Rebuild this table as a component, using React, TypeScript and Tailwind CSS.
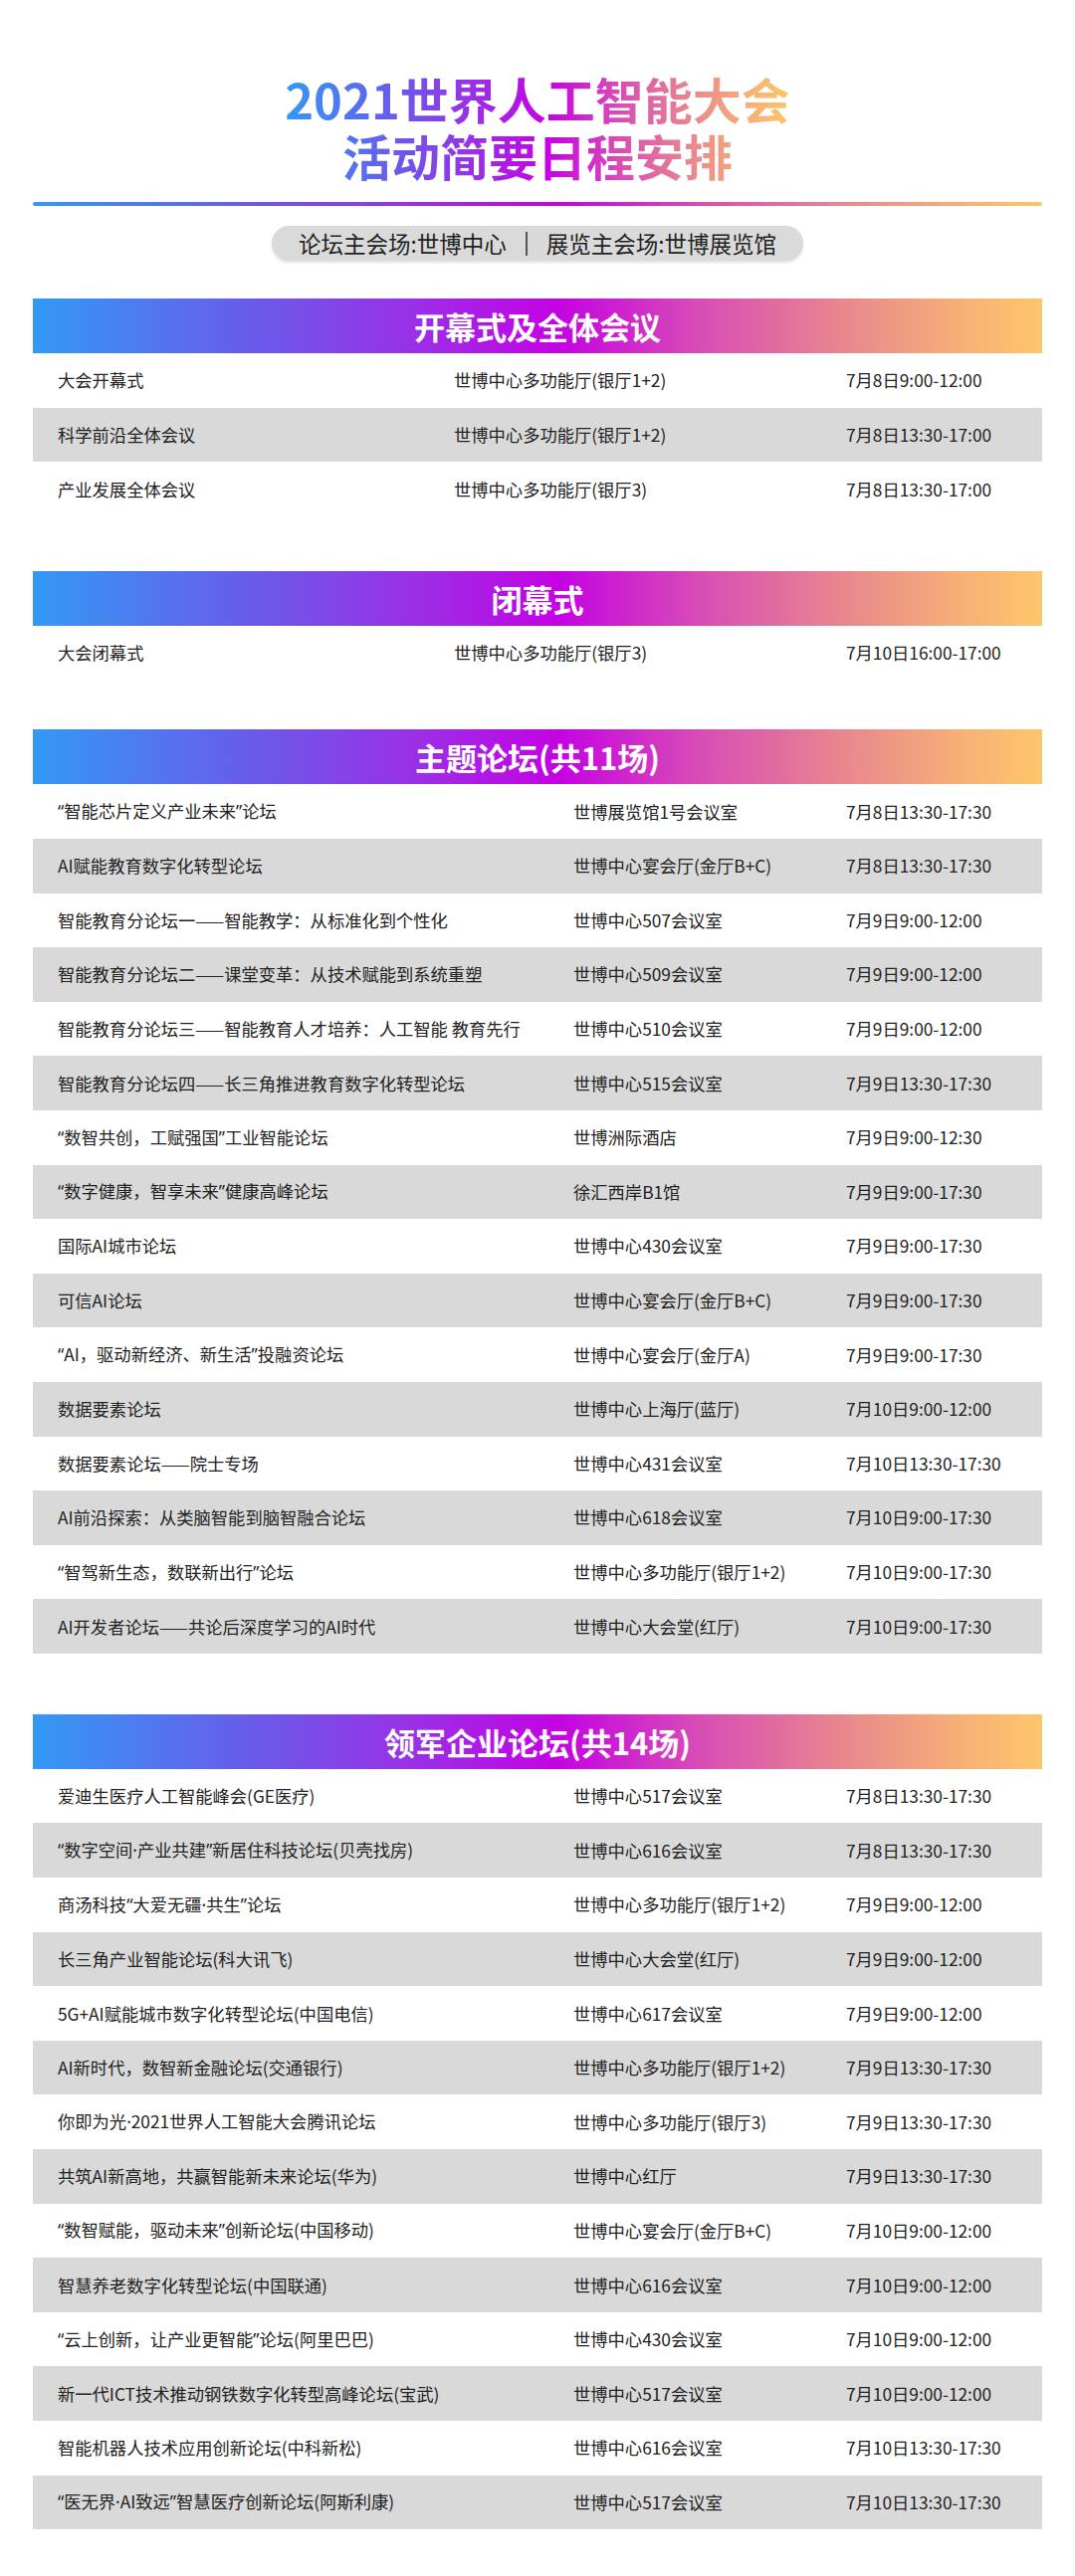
import React from "react";

type Row = [string, string, string];

const sec1: Row[] = [
  ["大会开幕式", "世博中心多功能厅(银厅1+2)", "7月8日9:00-12:00"],
  ["科学前沿全体会议", "世博中心多功能厅(银厅1+2)", "7月8日13:30-17:00"],
  ["产业发展全体会议", "世博中心多功能厅(银厅3)", "7月8日13:30-17:00"],
];

const sec2: Row[] = [["大会闭幕式", "世博中心多功能厅(银厅3)", "7月10日16:00-17:00"]];

const sec3: Row[] = [
  ["“智能芯片定义产业未来”论坛", "世博展览馆1号会议室", "7月8日13:30-17:30"],
  ["AI赋能教育数字化转型论坛", "世博中心宴会厅(金厅B+C)", "7月8日13:30-17:30"],
  ["智能教育分论坛一——智能教学：从标准化到个性化", "世博中心507会议室", "7月9日9:00-12:00"],
  ["智能教育分论坛二——课堂变革：从技术赋能到系统重塑", "世博中心509会议室", "7月9日9:00-12:00"],
  ["智能教育分论坛三——智能教育人才培养：人工智能 教育先行", "世博中心510会议室", "7月9日9:00-12:00"],
  ["智能教育分论坛四——长三角推进教育数字化转型论坛", "世博中心515会议室", "7月9日13:30-17:30"],
  ["“数智共创，工赋强国”工业智能论坛", "世博洲际酒店", "7月9日9:00-12:30"],
  ["“数字健康，智享未来”健康高峰论坛", "徐汇西岸B1馆", "7月9日9:00-17:30"],
  ["国际AI城市论坛", "世博中心430会议室", "7月9日9:00-17:30"],
  ["可信AI论坛", "世博中心宴会厅(金厅B+C)", "7月9日9:00-17:30"],
  ["“AI，驱动新经济、新生活”投融资论坛", "世博中心宴会厅(金厅A)", "7月9日9:00-17:30"],
  ["数据要素论坛", "世博中心上海厅(蓝厅)", "7月10日9:00-12:00"],
  ["数据要素论坛——院士专场", "世博中心431会议室", "7月10日13:30-17:30"],
  ["AI前沿探索：从类脑智能到脑智融合论坛", "世博中心618会议室", "7月10日9:00-17:30"],
  ["“智驾新生态，数联新出行”论坛", "世博中心多功能厅(银厅1+2)", "7月10日9:00-17:30"],
  ["AI开发者论坛——共论后深度学习的AI时代", "世博中心大会堂(红厅)", "7月10日9:00-17:30"],
];

const sec4: Row[] = [
  ["爱迪生医疗人工智能峰会(GE医疗)", "世博中心517会议室", "7月8日13:30-17:30"],
  ["“数字空间·产业共建”新居住科技论坛(贝壳找房)", "世博中心616会议室", "7月8日13:30-17:30"],
  ["商汤科技“大爱无疆·共生”论坛", "世博中心多功能厅(银厅1+2)", "7月9日9:00-12:00"],
  ["长三角产业智能论坛(科大讯飞)", "世博中心大会堂(红厅)", "7月9日9:00-12:00"],
  ["5G+AI赋能城市数字化转型论坛(中国电信)", "世博中心617会议室", "7月9日9:00-12:00"],
  ["AI新时代，数智新金融论坛(交通银行)", "世博中心多功能厅(银厅1+2)", "7月9日13:30-17:30"],
  ["你即为光·2021世界人工智能大会腾讯论坛", "世博中心多功能厅(银厅3)", "7月9日13:30-17:30"],
  ["共筑AI新高地，共赢智能新未来论坛(华为)", "世博中心红厅", "7月9日13:30-17:30"],
  ["“数智赋能，驱动未来”创新论坛(中国移动)", "世博中心宴会厅(金厅B+C)", "7月10日9:00-12:00"],
  ["智慧养老数字化转型论坛(中国联通)", "世博中心616会议室", "7月10日9:00-12:00"],
  ["“云上创新，让产业更智能”论坛(阿里巴巴)", "世博中心430会议室", "7月10日9:00-12:00"],
  ["新一代ICT技术推动钢铁数字化转型高峰论坛(宝武)", "世博中心517会议室", "7月10日9:00-12:00"],
  ["智能机器人技术应用创新论坛(中科新松)", "世博中心616会议室", "7月10日13:30-17:30"],
  ["“医无界·AI致远”智慧医疗创新论坛(阿斯利康)", "世博中心517会议室", "7月10日13:30-17:30"],
];

const GRAD =
  "bg-[linear-gradient(90deg,#3399f5_0%,#6a5aea_22%,#9b2fe6_38%,#c402e3_52%,#d84cb6_66%,#e8868f_80%,#f6ad78_91%,#fdc66a_100%)]";

function Txt({ s }: { s: string }) {
  const parts = s.split(/([“”·])/);
  return (
    <>
      {parts.map((p, i) =>
        p === "“" || p === "”" || p === "·" ? (
          <span key={i} className="font-['Noto_Sans',sans-serif]">
            {p}
          </span>
        ) : (
          <React.Fragment key={i}>{p}</React.Fragment>
        )
      )}
    </>
  );
}

function Band({ title }: { title: string }) {
  return (
    <div className={"h-[55px] w-full flex items-center justify-center " + GRAD}>
      <span className="text-white text-[31px] font-bold leading-none">{title}</span>
    </div>
  );
}

function Table({ rows, wide }: { rows: Row[]; wide?: boolean }) {
  return (
    <div className="flex flex-col">
      {rows.map((r, i) => (
        <div
          key={i}
          className={
            "h-[54.6px] flex items-center pl-[25px] text-[17.3px] text-[#222] " +
            (i % 2 === 1 ? "bg-[#d9d9d9]" : "bg-white")
          }
        >
          <div className={wide ? "w-[518px] shrink-0 whitespace-nowrap" : "w-[398px] shrink-0 whitespace-nowrap"}>
            <Txt s={r[0]} />
          </div>
          <div className={wide ? "w-[274px] shrink-0 whitespace-nowrap" : "w-[394px] shrink-0 whitespace-nowrap"}>
            <Txt s={r[1]} />
          </div>
          <div className="whitespace-nowrap">{r[2]}</div>
        </div>
      ))}
    </div>
  );
}

export default function App() {
  return (
    <div className="w-[1080px] bg-white font-['Noto_Sans_CJK_SC','Noto_Sans',sans-serif] pt-[70px] pb-[45px]">
      <div className="flex justify-center">
        <div className={"inline-block text-center text-[49px] leading-[57px] font-bold bg-clip-text text-transparent " + GRAD}>
          <div>2021世界人工智能大会</div>
          <div>活动简要日程安排</div>
        </div>
      </div>
      <div className={"mx-auto mt-[19px] w-[1014px] h-[4px] rounded-full " + GRAD} />
      <div className="flex justify-center mt-[20px]">
        <div className="inline-flex items-center h-[35px] rounded-full bg-[#dadada] px-[27px] text-[22.5px] text-[#222] shadow-[0_2px_3px_rgba(0,0,0,0.12)]">
          <span>论坛主会场:世博中心</span>
          <span className="mx-[19px] w-[2px] h-[24px] bg-[#555]" />
          <span>展览主会场:世博展览馆</span>
        </div>
      </div>
      <div className="mx-auto w-[1014px]">
        <div className="mt-[38px]">
          <Band title="开幕式及全体会议" />
          <Table rows={sec1} />
        </div>
        <div className="mt-[55px]">
          <Band title="闭幕式" />
          <Table rows={sec2} />
        </div>
        <div className="mt-[50px]">
          <Band title="主题论坛(共11场)" />
          <Table rows={sec3} wide />
        </div>
        <div className="mt-[61px]">
          <Band title="领军企业论坛(共14场)" />
          <Table rows={sec4} wide />
        </div>
      </div>
    </div>
  );
}
